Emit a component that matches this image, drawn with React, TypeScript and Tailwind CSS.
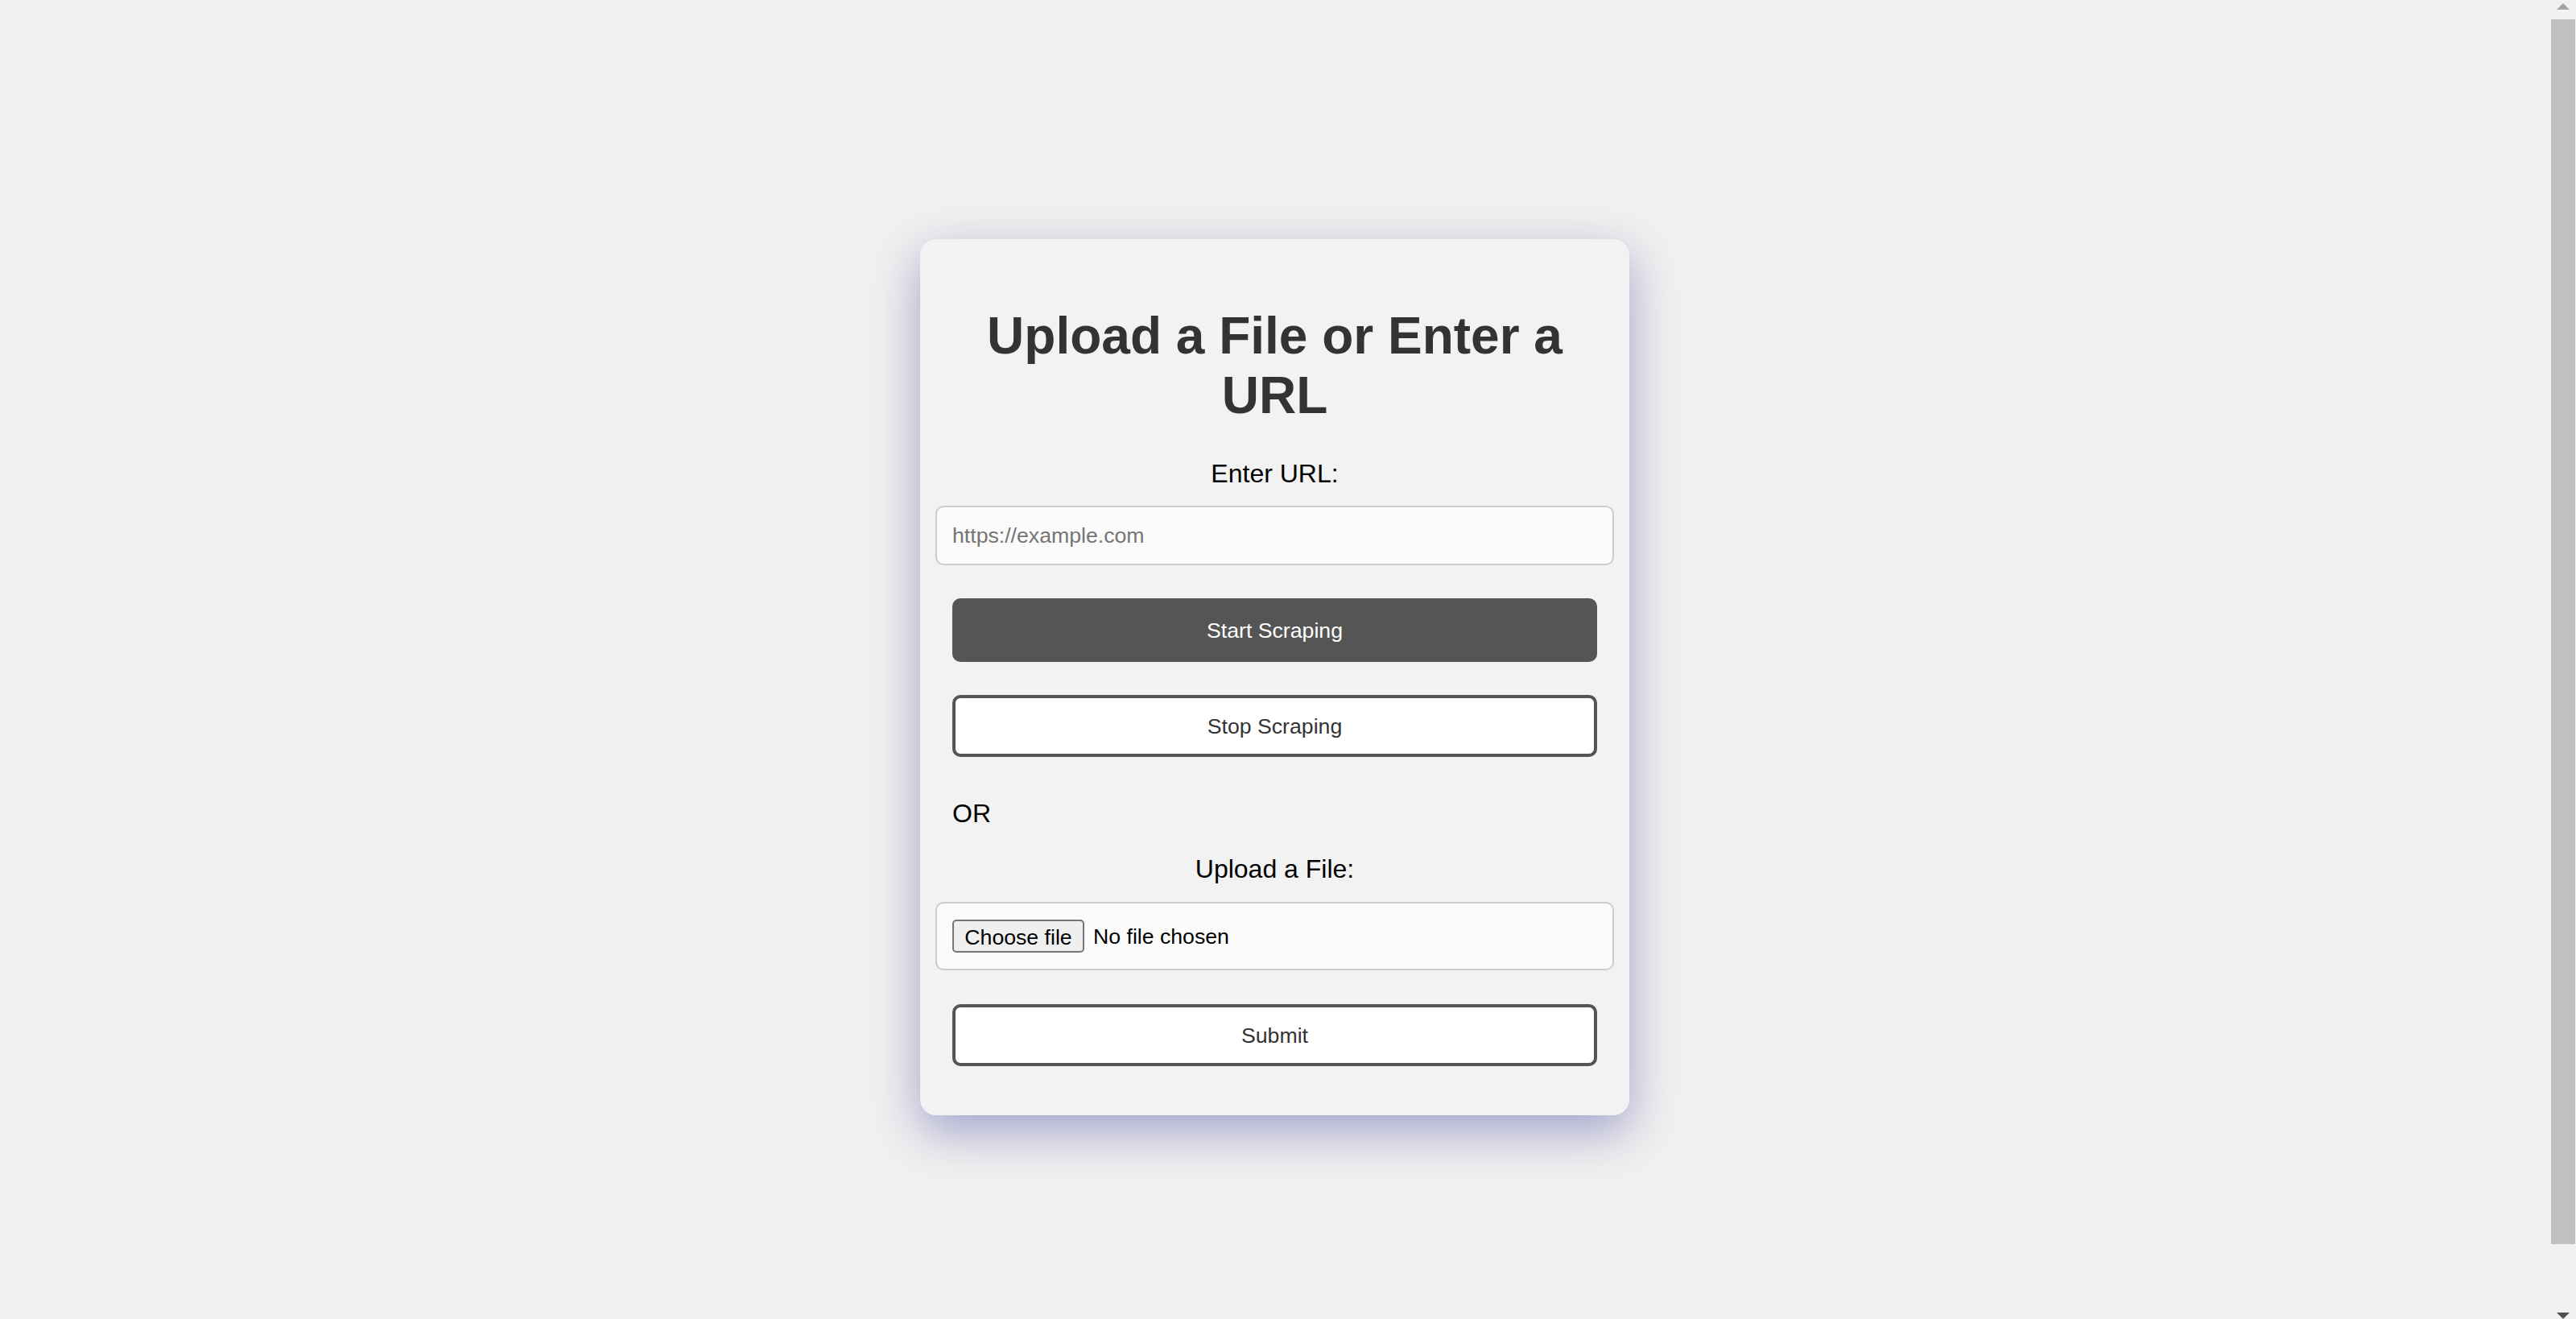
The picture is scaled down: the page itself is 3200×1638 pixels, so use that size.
import React from 'react';

const font = "font-['Liberation_Sans',Arial,Helvetica,sans-serif]";

const Scrollbar = () => (
  <div className="w-[33px] h-full bg-[#f1f1f1] flex flex-col items-center shrink-0">
    <div className="h-[24px] pt-[4px]">
      <div className="w-0 h-0 border-x-[8px] border-x-transparent border-b-[8px] border-b-[#a3a3a3]" />
    </div>
    <div className="h-[1521px] w-[30px] ml-[1px] bg-[#c1c1c1]" />
    <div className="flex-1" />
    <div className="w-0 h-0 border-x-[8px] border-x-transparent border-t-[8px] border-t-[#505050]" />
  </div>
);

const App = () => {
  return (
    <div className={`h-screen w-full flex bg-[#f0f0f0] overflow-hidden ${font}`}>
      <main className="flex-1 flex items-center justify-center pt-[44px]">
        <div className="w-[881px] bg-[#f2f2f2] rounded-[20px] shadow-[0_20px_60px_rgba(0,0,128,0.33)] px-[40px] pt-[84px] pb-[61px] flex flex-col">
          <h1 className="text-[64px] leading-[73.5px] font-bold text-[#333] text-center">
            Upload a File or Enter a URL
          </h1>

          <label className="mt-[42px] text-[32px] leading-[37px] text-black text-center">
            Enter URL:
          </label>
          <input
            type="text"
            placeholder="https://example.com"
            className="mt-[21px] -mx-[21px] h-[74px] px-[19px] bg-[#fbfbfb] border-2 border-[#cccccc] rounded-[10px] text-[26.67px] text-black placeholder:text-[#757575] outline-none"
          />

          <button className="mt-[41px] h-[79px] rounded-[10px] bg-[#555555] text-white text-[26.67px]">
            Start Scraping
          </button>
          <button className="mt-[41px] h-[77px] rounded-[10px] bg-white border-4 border-[#555555] text-[#333] text-[26.67px]">
            Stop Scraping
          </button>

          <p className="mt-[52px] text-[32px] leading-[37px] text-black">OR</p>

          <label className="mt-[32px] text-[32px] leading-[37px] text-black text-center">
            Upload a File:
          </label>
          <div className="mt-[22px] -mx-[21px] h-[85px] px-[19px] bg-[#fbfbfb] border-2 border-[#cccccc] rounded-[10px] flex items-center gap-[11px]">
            <button className="h-[41px] w-[164px] bg-[#efefef] border-2 border-[#767676] rounded-[5px] text-[26.67px] text-black">
              Choose file
            </button>
            <span className="text-[26.67px] text-black">No file chosen</span>
          </div>

          <button className="mt-[42px] h-[77px] rounded-[10px] bg-white border-4 border-[#555555] text-[#333] text-[26.67px]">
            Submit
          </button>
        </div>
      </main>
      <Scrollbar />
    </div>
  );
};

export default App;
